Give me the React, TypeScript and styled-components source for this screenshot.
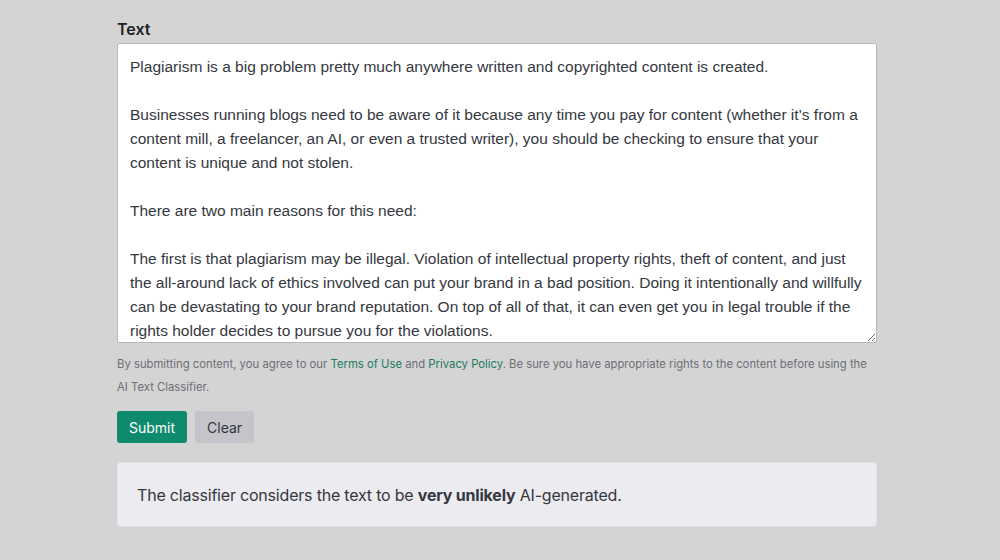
import React from "react";
import styled, { createGlobalStyle } from "styled-components";

const Global = createGlobalStyle`
  html, body { margin: 0; padding: 0; background: #d4d4d4; }
  body { font-family: Inter, "Liberation Sans", sans-serif; }
`;

const Page = styled.div`
  width: 1000px;
  height: 560px;
  background: #d4d4d4;
  box-sizing: border-box;
  padding: 18px 123px 0 117px;
  display: flex;
  flex-direction: column;
`;

const Label = styled.label`
  font-family: Inter, sans-serif;
  font-weight: 600;
  font-size: 16px;
  line-height: 22px;
  color: #202123;
  margin-bottom: 3px;
`;

const Area = styled.textarea`
  width: 760px;
  height: 300px;
  box-sizing: border-box;
  border: 1px solid #b9b9bd;
  border-radius: 2px;
  background: #fff;
  padding: 11px 12px;
  font-family: "Liberation Sans", Arial, sans-serif;
  font-size: 15.5px;
  line-height: 24px;
  color: #353740;
  resize: vertical;
  overflow: hidden;
  outline: none;
  margin: 0;
`;

const Note = styled.p`
  margin: 10px 0 0;
  font-family: Inter, sans-serif;
  font-size: 11.3px;
  line-height: 23px;
  color: #6e6e76;
  width: 760px;
`;

const Link = styled.a`
  color: #1c7a62;
  text-decoration: none;
`;

const Buttons = styled.div`
  display: flex;
  gap: 8px;
  margin-top: 12px;
`;

const Button = styled.button<{ $primary?: boolean }>`
  font-family: Inter, sans-serif;
  font-size: 14px;
  height: 32px;
  padding: 0 12px;
  border: none;
  border-radius: 3px;
  background: ${(p) => (p.$primary ? "#0e8b6c" : "#c4c4ca")};
  color: ${(p) => (p.$primary ? "#fff" : "#353740")};
  cursor: pointer;
`;

const Result = styled.div`
  margin-top: 19px;
  width: 760px;
  height: 65px;
  box-sizing: border-box;
  background: #ebebf0;
  border: 1px solid #e2e2e6;
  border-radius: 3px;
  display: flex;
  align-items: center;
  padding: 0 19px;
  font-family: Inter, sans-serif;
  font-size: 16px;
  color: #353740;
  letter-spacing: -0.2px;
`;

const text = `Plagiarism is a big problem pretty much anywhere written and copyrighted content is created.

Businesses running blogs need to be aware of it because any time you pay for content (whether it’s from a content mill, a freelancer, an AI, or even a trusted writer), you should be checking to ensure that your content is unique and not stolen.

There are two main reasons for this need:

The first is that plagiarism may be illegal. Violation of intellectual property rights, theft of content, and just the all-around lack of ethics involved can put your brand in a bad position. Doing it intentionally and willfully can be devastating to your brand reputation. On top of all of that, it can even get you in legal trouble if the rights holder decides to pursue you for the violations.`;

export default function App() {
  return (
    <>
      <Global />
      <Page>
        <Label>Text</Label>
        <Area readOnly defaultValue={text} />
        <Note>
          By submitting content, you agree to our <Link>Terms of Use</Link> and{" "}
          <Link>Privacy Policy</Link>. Be sure you have appropriate rights to the content before using the AI Text Classifier.
        </Note>
        <Buttons>
          <Button $primary>Submit</Button>
          <Button>Clear</Button>
        </Buttons>
        <Result>
          <span>
            The classifier considers the text to be <b>very unlikely</b> AI-generated.
          </span>
        </Result>
      </Page>
    </>
  );
}
